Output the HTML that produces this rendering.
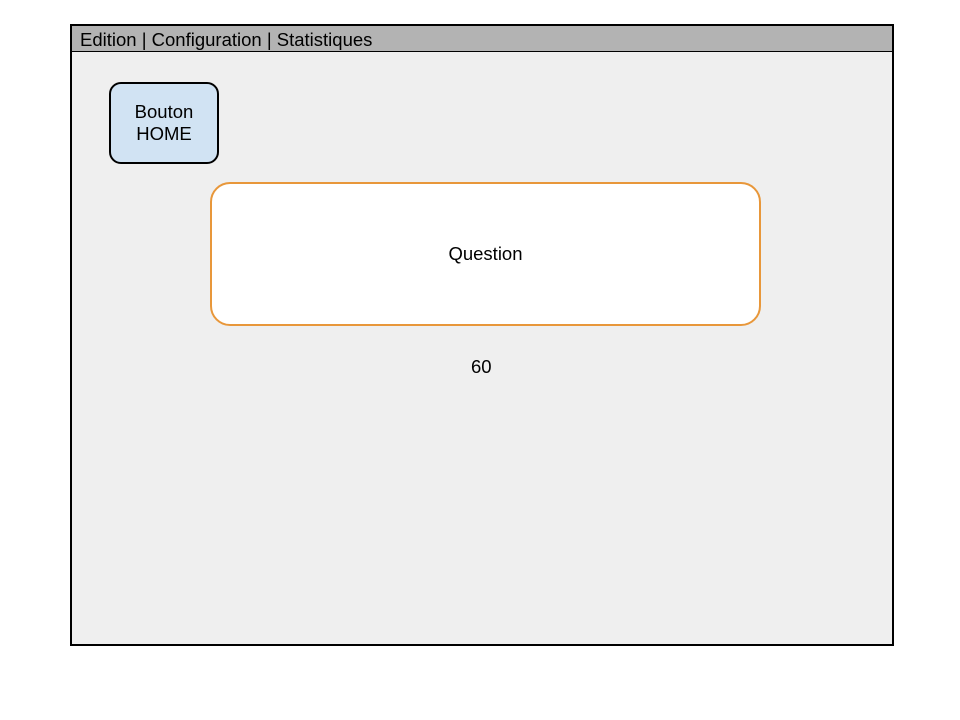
<!DOCTYPE html>
<html><head><style>
body{margin:0;width:960px;height:720px;background:#fff;position:relative;font-family:"Liberation Sans",sans-serif;}
.frame{position:absolute;left:70px;top:24px;width:820px;height:618px;border:2px solid #000;background:#efefef;box-sizing:content-box;}
.bar{position:absolute;left:0;top:0;width:820px;height:26px;background:#b3b3b3;border-bottom:1px solid #000;font-size:18.5px;line-height:27px;padding-left:8px;box-sizing:border-box;}
.home{position:absolute;left:109px;top:82px;width:110px;height:82px;border:2px solid #000;border-radius:12px;background:#d1e3f3;box-sizing:border-box;font-size:18.5px;text-align:center;display:flex;align-items:center;justify-content:center;line-height:22px;}
.q{position:absolute;left:210px;top:182px;width:551px;height:144px;border:2px solid #e8973a;border-radius:20px;background:#fff;box-sizing:border-box;font-size:18.5px;display:flex;align-items:center;justify-content:center;}
.n{position:absolute;left:471px;top:356px;font-size:18.5px;}
</style></head><body>
<div class="frame"><div class="bar">Edition | Configuration | Statistiques</div></div>
<div class="home">Bouton<br>HOME</div>
<div class="q">Question</div>
<div class="n">60</div>
</body></html>
